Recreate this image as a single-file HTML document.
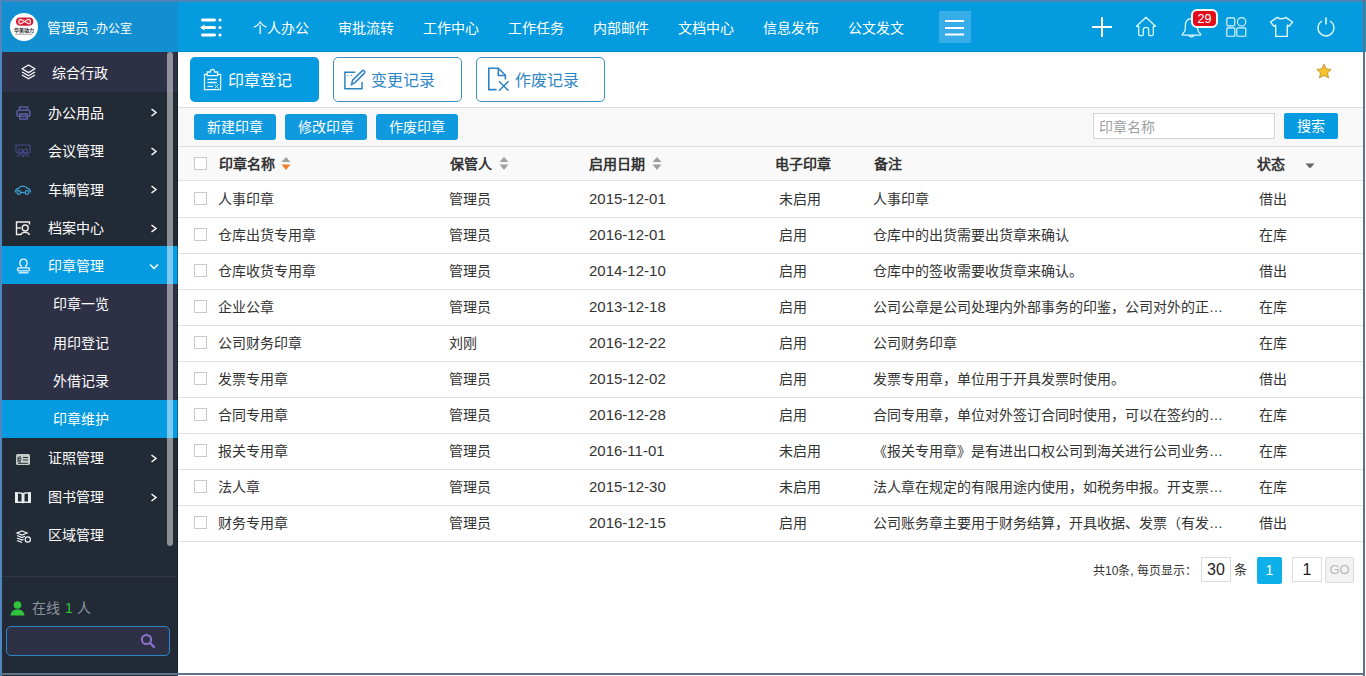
<!DOCTYPE html>
<html lang="zh-CN">
<head>
<meta charset="utf-8">
<style>
*{margin:0;padding:0;box-sizing:border-box}
html,body{width:1366px;height:676px;overflow:hidden;background:#fff}
body{position:relative;font-family:"Liberation Sans",sans-serif;font-size:14px;color:#333}
.a{position:absolute}
#hdr{left:0;top:0;width:1366px;height:52px;background:#049bdf}
#hdrl{left:0;top:0;width:178px;height:52px;background:#128fd0}
#side{left:0;top:52px;width:178px;height:624px;background:#222a36}
#main{left:178px;top:52px;width:1188px;height:624px;background:#fff}
.nav{top:18px;color:#fff;font-size:14px;line-height:20px;white-space:nowrap}
.srow{left:2px;width:176px;color:#fff;font-size:14px}
.srow span{position:absolute;line-height:20px;white-space:nowrap}
.chev{position:absolute;left:150px;width:8px;height:8px}
.tabbtn{top:57px;width:129px;height:45px;border-radius:5px;font-size:16px;line-height:20px}
.tb{top:114px;width:82px;height:26px;border-radius:3px;background:#0f9ae0;color:#fff;text-align:center;line-height:26px}
.th{position:absolute;font-weight:bold;color:#333;line-height:20px;white-space:nowrap}
.td{position:absolute;line-height:20px;white-space:nowrap;color:#333}
.dt{font-size:15px}
.hl{position:absolute;left:178px;width:1185px;height:1px;background:#e0e0e0}
.cb{position:absolute;left:194px;width:13px;height:13px;border:1px solid #c8c8c8;background:#fff}
</style>
</head>
<body>
<!-- header -->
<div id="hdr" class="a"></div>
<div id="hdrl" class="a"></div>
<svg class="a" style="left:10px;top:13px" width="28" height="28" viewBox="0 0 28 28">
 <circle cx="14" cy="14" r="14" fill="#fff"/>
 <rect x="6" y="4.4" width="17.3" height="8.3" rx="4.1" fill="#d01c34"/>
 <path d="M10.6 6.3 C8.2 6.3 8.2 10.8 10.6 10.8 C12.4 10.8 16.9 6.3 18.7 6.3 C21.1 6.3 21.1 10.8 18.7 10.8 C16.9 10.8 12.4 6.3 10.6 6.3Z" fill="#e03048" stroke="#f8d8dc" stroke-width="1.2"/>
 <text x="14" y="19.2" font-size="5" font-weight="bold" text-anchor="middle" fill="#222" textLength="20" lengthAdjust="spacingAndGlyphs">华美动力</text>
 <rect x="5" y="20.8" width="17" height="1" fill="#aaa"/>
</svg>
<div class="a" style="left:47px;top:18px;color:#fff;line-height:20px;white-space:nowrap"><span style="font-size:14px">管理员</span><span style="font-size:12px"> -办公室</span></div>
<svg class="a" style="left:200px;top:18px" width="22" height="19" viewBox="0 0 22 19">
 <g fill="#fff">
 <rect x="1" y="0.5" width="15" height="3" rx="1.5"/>
 <circle cx="20" cy="2" r="1.6"/>
 <rect x="4" y="8" width="12" height="3" rx="1.5"/>
 <path d="M0 9.5 L4.5 6.5 L4.5 12.5Z"/>
 <circle cx="20" cy="9.5" r="1.6"/>
 <rect x="1" y="15.5" width="15" height="3" rx="1.5"/>
 <circle cx="20" cy="17" r="1.6"/>
 </g>
</svg>
<div class="a nav" style="left:253px">个人办公</div>
<div class="a nav" style="left:338px">审批流转</div>
<div class="a nav" style="left:423px">工作中心</div>
<div class="a nav" style="left:508px">工作任务</div>
<div class="a nav" style="left:593px">内部邮件</div>
<div class="a nav" style="left:678px">文档中心</div>
<div class="a nav" style="left:763px">信息发布</div>
<div class="a nav" style="left:848px">公文发文</div>
<div class="a" style="left:939px;top:11px;width:32px;height:32px;background:#36ace8"></div>
<svg class="a" style="left:945px;top:19px" width="20" height="18" viewBox="0 0 20 18">
 <g fill="#fff"><rect x="0" y="1" width="19" height="2"/><rect x="0" y="8" width="19" height="2"/><rect x="0" y="14.5" width="19" height="2"/></g>
</svg>
<!-- right icons -->
<svg class="a" style="left:1092px;top:17px" width="20" height="20" viewBox="0 0 20 20">
 <rect x="9" y="0" width="2" height="20" fill="#fff"/><rect x="0" y="9" width="20" height="2" fill="#fff"/>
</svg>
<svg class="a" style="left:1135px;top:16px" width="22" height="21" viewBox="0 0 22 21">
 <path d="M11 1.3 L20.5 10.3 L18.3 10.3 L18.3 18.3 Q18.3 19.6 17 19.6 L15 19.6 Q13.7 19.6 13.7 18.3 L13.7 13.8 C13.7 10.6 8.3 10.6 8.3 13.8 L8.3 18.3 Q8.3 19.6 7 19.6 L5 19.6 Q3.7 19.6 3.7 18.3 L3.7 10.3 L1.5 10.3 Z" fill="none" stroke="#dcfaff" stroke-width="1.3" stroke-linejoin="round"/>
</svg>
<svg class="a" style="left:1181px;top:16px" width="21" height="22" viewBox="0 0 21 22">
 <path d="M10.5 2.5 C6 2.5 4.3 6 4.3 10 L4.3 13.5 C4.3 15.5 2.8 16.5 1.3 18.2 L1.3 19 L19.7 19 L19.7 18.2 C18.2 16.5 16.7 15.5 16.7 13.5 L16.7 10 C16.7 6 15 2.5 10.5 2.5Z" fill="none" stroke="#e4faff" stroke-width="1.25" stroke-linejoin="round"/>
 <path d="M8 19.3 C8 21.3 13 21.3 13 19.3" fill="none" stroke="#e4faff" stroke-width="1.25"/>
</svg>
<div class="a" style="left:1191px;top:9px;width:27px;height:19px;border-radius:6px;background:#e20d1c;border:2px solid #f4fbff;color:#fff;font-size:12.5px;line-height:16px;text-align:center">29</div>
<svg class="a" style="left:1226px;top:17px" width="21" height="20" viewBox="0 0 21 20">
 <g fill="none" stroke="#e2f9ff" stroke-width="1.15">
 <rect x="0.8" y="0.8" width="8" height="8" rx="1.5"/>
 <circle cx="15.6" cy="4.8" r="4.2"/>
 <rect x="0.8" y="10.8" width="8" height="8.4" rx="1"/>
 <rect x="10.8" y="10.8" width="9" height="8.4" rx="1"/>
 </g>
</svg>
<svg class="a" style="left:1269px;top:16px" width="25" height="22" viewBox="0 0 25 22">
 <path d="M8.3 1.3 C9.5 3.2 15.5 3.2 16.7 1.3 L23.5 6 L20.3 10.2 L18.3 9.2 L18.3 20.4 L6.7 20.4 L6.7 9.2 L4.7 10.2 L1.5 6 Z" fill="none" stroke="#e2f9ff" stroke-width="1.4" stroke-linejoin="round"/>
</svg>
<svg class="a" style="left:1316px;top:17px" width="20" height="20" viewBox="0 0 20 20">
 <path d="M6 4 A8 8 0 1 0 14 4" fill="none" stroke="#e2f9ff" stroke-width="1.4"/>
 <rect x="9.2" y="0.5" width="1.6" height="7" fill="#e2f9ff"/>
</svg>

<!-- sidebar -->
<div id="side" class="a"></div>
<div class="a" style="left:2px;top:52px;width:176px;height:40px;background:#2e3146"></div>
<div class="a" style="left:2px;top:246px;width:176px;height:38px;background:#069ae0"></div>
<div class="a" style="left:2px;top:284px;width:176px;height:116px;background:#2e3146"></div>
<div class="a" style="left:2px;top:400px;width:176px;height:38px;background:#069ae0"></div>
<!-- side text -->
<div class="a srow" style="top:0"><span style="left:50px;top:63px">综合行政</span>
<span style="left:46px;top:102.5px">办公用品</span>
<span style="left:46px;top:141px">会议管理</span>
<span style="left:46px;top:179.5px">车辆管理</span>
<span style="left:46px;top:218px">档案中心</span>
<span style="left:46px;top:256px">印章管理</span>
<span style="left:51px;top:294px">印章一览</span>
<span style="left:51px;top:333px">用印登记</span>
<span style="left:51px;top:370.5px">外借记录</span>
<span style="left:51px;top:409px">印章维护</span>
<span style="left:46px;top:448px">证照管理</span>
<span style="left:46px;top:487px">图书管理</span>
<span style="left:46px;top:525px">区域管理</span>
</div>
<!-- chevrons -->
<svg class="a" style="left:150px;top:108px" width="8" height="9" viewBox="0 0 8 9"><path d="M1.5 1 L6 4.5 L1.5 8" fill="none" stroke="#fff" stroke-width="1.5"/></svg>
<svg class="a" style="left:150px;top:146.5px" width="8" height="9" viewBox="0 0 8 9"><path d="M1.5 1 L6 4.5 L1.5 8" fill="none" stroke="#fff" stroke-width="1.5"/></svg>
<svg class="a" style="left:150px;top:185px" width="8" height="9" viewBox="0 0 8 9"><path d="M1.5 1 L6 4.5 L1.5 8" fill="none" stroke="#fff" stroke-width="1.5"/></svg>
<svg class="a" style="left:150px;top:223.5px" width="8" height="9" viewBox="0 0 8 9"><path d="M1.5 1 L6 4.5 L1.5 8" fill="none" stroke="#fff" stroke-width="1.5"/></svg>
<svg class="a" style="left:149px;top:263px" width="10" height="7" viewBox="0 0 10 7"><path d="M1 1.5 L5 5.5 L9 1.5" fill="none" stroke="#fff" stroke-width="1.5"/></svg>
<svg class="a" style="left:150px;top:454px" width="8" height="9" viewBox="0 0 8 9"><path d="M1.5 1 L6 4.5 L1.5 8" fill="none" stroke="#fff" stroke-width="1.5"/></svg>
<svg class="a" style="left:150px;top:492.5px" width="8" height="9" viewBox="0 0 8 9"><path d="M1.5 1 L6 4.5 L1.5 8" fill="none" stroke="#fff" stroke-width="1.5"/></svg>
<!-- side icons -->
<svg class="a" style="left:21px;top:64px" width="15" height="16" viewBox="0 0 15 16">
 <g fill="none" stroke="#fff" stroke-width="1.3" stroke-linejoin="round">
 <path d="M7.5 1 L14 4.8 L7.5 8.6 L1 4.8Z"/>
 <path d="M1 8 L7.5 11.8 L14 8"/>
 <path d="M1 11 L7.5 14.8 L14 11"/>
 </g>
</svg>
<svg class="a" style="left:16px;top:106px" width="15" height="14" viewBox="0 0 15 14">
 <g fill="none" stroke="#5d5a9e" stroke-width="1.6">
 <path d="M3.5 4 L3.5 1 L11.5 1 L11.5 4"/>
 <rect x="1" y="4.2" width="13" height="6" rx="2"/>
 <rect x="3.8" y="8" width="7.4" height="5"/>
 </g>
</svg>
<svg class="a" style="left:15px;top:144px" width="16" height="14" viewBox="0 0 16 14">
 <g fill="none" stroke="#4a4888" stroke-width="1.2">
 <rect x="1" y="1" width="14" height="8" rx="1"/>
 <circle cx="5.5" cy="7" r="2"/>
 <circle cx="10.5" cy="7" r="2"/>
 <path d="M2.5 13 C3 10 8 10 8.5 13 M7.5 13 C8 10 13 10 13.5 13"/>
 </g>
</svg>
<svg class="a" style="left:14px;top:184px" width="18" height="12" viewBox="0 0 18 12">
 <g fill="none" stroke="#3d9dd0" stroke-width="1.3">
 <path d="M1.5 8.5 L1.5 7 C2 5 3.5 4.5 4.5 4.5 C6 1.5 11 1 13.5 4.5 C15.5 4.8 16.5 6 16.5 8.5"/>
 <circle cx="4.8" cy="8.5" r="1.8"/>
 <circle cx="13" cy="8.5" r="1.8"/>
 <path d="M6.6 8.5 L11.2 8.5"/>
 </g>
</svg>
<svg class="a" style="left:15px;top:221px" width="16" height="15" viewBox="0 0 16 15">
 <g fill="none" stroke="#f0eee6" stroke-width="1.4">
 <path d="M7 1 L1.5 1 L1.5 13.5 L6 13.5"/>
 <path d="M7 1 L14.5 1 L14.5 3.5"/>
 <path d="M1.5 7 L6 7"/>
 <circle cx="10.2" cy="7" r="3"/>
 <path d="M6 14 C6.5 10.5 13.5 10.5 14.5 14"/>
 </g>
</svg>
<svg class="a" style="left:16px;top:258px" width="15" height="16" viewBox="0 0 15 16">
 <g fill="none" stroke="#e8f6ff" stroke-width="1.3">
 <path d="M5.3 9.5 L5.3 8 C3 6.5 3.3 1.2 7.5 1.2 C11.7 1.2 12 6.5 9.7 8 L9.7 9.5"/>
 <rect x="1.5" y="9.8" width="12" height="3" rx="1"/>
 <path d="M2.5 14.8 L12.5 14.8"/>
 </g>
</svg>
<svg class="a" style="left:15px;top:453px" width="16" height="13" viewBox="0 0 16 13">
 <rect x="1" y="1" width="14" height="11" rx="1.5" fill="#c8ccc8" />
 <g stroke="#2a3038" stroke-width="1" fill="none">
 <path d="M3 4 L3 9 M3.5 4 L6 4 M3.5 9 L6 9 M8 4.5 L13 4.5 M8 7 L13 7 M3 10.3 L13 10.3"/>
 <circle cx="4.8" cy="6.3" r="1.2"/>
 </g>
</svg>
<svg class="a" style="left:14px;top:491px" width="18" height="13" viewBox="0 0 18 13">
 <path d="M1 1 L8.2 1.5 L9 2.2 L9.8 1.5 L17 1 L17 12 L9.8 12 L9 12.5 L8.2 12 L1 12Z" fill="#e8ecea"/>
 <path d="M4 2.5 L7.5 3 L7.5 10.5 L4 10.5Z M14 2.5 L10.5 3 L10.5 10.5 L14 10.5Z" fill="#222a36"/>
</svg>
<svg class="a" style="left:15px;top:530px" width="17" height="13" viewBox="0 0 17 13">
 <g fill="none" stroke="#f4f4f4" stroke-width="1.2">
 <path d="M7 1 L12 3 L7 5 L2 3Z"/>
 <path d="M2 5.5 L7 7.5 L10 6.3"/>
 <path d="M2 8 L7 10 L8.5 9.4"/>
 <path d="M2 10.5 L7 12.5"/>
 <circle cx="12.8" cy="9.5" r="2.6"/>
 </g>
</svg>
<!-- scrollbar -->
<div class="a" style="left:167px;top:52px;width:6px;height:494px;border-radius:3px;background:rgba(255,255,255,0.48)"></div>
<div class="a" style="left:177px;top:52px;width:1px;height:621px;background:rgba(0,0,0,0.3)"></div>
<!-- bottom area -->
<div class="a" style="left:2px;top:576px;width:174px;height:1px;background:#35344c"></div>
<svg class="a" style="left:10px;top:600px" width="15" height="16" viewBox="0 0 15 16">
 <circle cx="7.5" cy="5" r="3.8" fill="#30c43a"/>
 <path d="M0.5 15.5 C1 11 4 9.5 7.5 9.5 C11 9.5 14 11 14.5 15.5Z" fill="#30c43a"/>
</svg>
<div class="a" style="left:32px;top:598px;line-height:20px;font-size:14px;color:#8b949e;white-space:nowrap">在线 <span style="color:#35c23f;margin-left:1px">1</span> 人</div>
<div class="a" style="left:6px;top:626px;width:164px;height:30px;border:1px solid #2b86c6;border-radius:5px;background:#2e3046"></div>
<svg class="a" style="left:140px;top:633px" width="16" height="16" viewBox="0 0 16 16">
 <circle cx="6.5" cy="6.5" r="4.6" fill="none" stroke="#8c72cc" stroke-width="2"/>
 <path d="M10 10 L14 14" stroke="#8c72cc" stroke-width="2.4" stroke-linecap="round"/>
</svg>

<!-- main -->
<div id="main" class="a"></div>
<div class="a" style="left:178px;top:51px;width:1185px;height:1px;background:#078dcf"></div>
<div class="a" style="left:178px;top:52px;width:1185px;height:1px;background:#e8f8fc"></div>
<div class="a" style="left:178px;top:53px;width:1185px;height:1px;background:#f8f8f6"></div>
<!-- tabs -->
<div class="a tabbtn" style="left:190px;background:#069ae0;color:#fff"><span class="a" style="left:38px;top:14px">印章登记</span></div>
<svg class="a" style="left:203px;top:67px" width="19" height="24" viewBox="0 0 19 24">
 <g fill="none" stroke="#e6faff" stroke-width="1.3">
 <path d="M4.3 7.3 L1.5 7.3 L1.5 22.6 L17.6 22.6 L17.6 7.3 L14.6 7.3"/>
 <path d="M4.3 8.6 L4.3 5 L7.3 5 C7.3 1.5 11.6 1.5 11.6 5 L14.6 5 L14.6 8.6 Z"/>
 <path d="M4.5 12.4 L14 12.4 M4.5 15.5 L14 15.5 M4.5 19.3 L10 19.3"/>
 <path d="M11.5 17.5 L15.5 21.5 M15.5 17.5 L11.5 21.5" stroke-width="0.9"/>
 </g>
</svg>
<div class="a tabbtn" style="left:333px;border:1px solid #3b91c4;color:#2f86c4;background:#fff"><span class="a" style="left:37px;top:13px">变更记录</span></div>
<svg class="a" style="left:343px;top:69px" width="24" height="21" viewBox="0 0 24 21">
 <g fill="none" stroke="#2f82c2" stroke-width="1.5">
 <path d="M12.3 3.2 L1.9 3.2 L1.9 19.8 L19 19.8 L19 13"/>
 <path d="M8.5 15.6 L9.6 11.2 L19.4 1.6 C20.5 0.8 22.6 2.6 21.6 3.9 L12 13.6 Z"/>
 </g>
 <circle cx="5" cy="6.6" r="0.7" fill="#2f82c2"/><circle cx="8.4" cy="6.6" r="0.7" fill="#2f82c2"/>
</svg>
<div class="a tabbtn" style="left:476px;border:1px solid #3b91c4;color:#2f86c4;background:#fff"><span class="a" style="left:38px;top:13px">作废记录</span></div>
<svg class="a" style="left:487px;top:66px" width="24" height="27" viewBox="0 0 24 27">
 <g fill="none" stroke="#2f82c2" stroke-width="1.6">
 <path d="M9.6 23.6 L1.8 23.6 L1.8 2.3 L11.3 2.3 L18.4 9.3 L18.4 13.4"/>
 <path d="M11.3 2.6 L11.3 9.5 L18 9.5"/>
 <path d="M12 15.2 L21.5 24.8 M21.5 15.2 L12 24.8" stroke-width="1.5"/>
 </g>
</svg>
<svg class="a" style="left:1315px;top:62px" width="18" height="18" viewBox="0 0 18 18">
 <path d="M9 2.2 L11.1 6.9 L16 7.5 L12.5 11 L13.5 15.8 L9 13.4 L4.5 15.8 L5.5 11 L2 7.5 L6.9 6.9Z" fill="#f6c431" stroke="#c8962a" stroke-width="1" stroke-linejoin="round"/>
</svg>
<div class="hl" style="top:107px;background:#dedede"></div>
<!-- toolbar -->
<div class="a" style="left:178px;top:108px;width:1185px;height:38px;background:#f8f8f8"></div>
<div class="a tb" style="left:194px">新建印章</div>
<div class="a tb" style="left:285px">修改印章</div>
<div class="a tb" style="left:376px">作废印章</div>
<div class="a" style="left:1093px;top:113px;width:182px;height:26px;border:1px solid #d4d4d4;background:#fff;color:#a0a0a0;line-height:26px;padding-left:5px">印章名称</div>
<div class="a" style="left:1284px;top:113px;width:54px;height:26px;border-radius:2px;background:#069ae0;color:#fff;text-align:center;line-height:26px">搜索</div>
<div class="hl" style="top:146px;background:#dedede"></div>
<!-- table header -->
<div class="a" style="left:178px;top:147px;width:1185px;height:33px;background:#f9f9f9"></div>
<div class="hl" style="top:180px"></div>
<div class="cb" style="top:157px"></div>
<div class="th" style="left:219px;top:154px">印章名称</div>
<svg class="a" style="left:281px;top:156px" width="10" height="15" viewBox="0 0 10 15"><path d="M5 1 L9.5 6 L0.5 6Z" fill="#a0a0a0"/><path d="M0.5 8.5 L9.5 8.5 L5 14Z" fill="#ee7d28"/></svg>
<div class="th" style="left:450px;top:154px">保管人</div>
<svg class="a" style="left:499px;top:156px" width="10" height="15" viewBox="0 0 10 15"><path d="M5 1 L9.5 6 L0.5 6Z" fill="#a0a0a0"/><path d="M0.5 8.5 L9.5 8.5 L5 14Z" fill="#a0a0a0"/></svg>
<div class="th" style="left:589px;top:154px">启用日期</div>
<svg class="a" style="left:652px;top:156px" width="10" height="15" viewBox="0 0 10 15"><path d="M5 1 L9.5 6 L0.5 6Z" fill="#a0a0a0"/><path d="M0.5 8.5 L9.5 8.5 L5 14Z" fill="#a0a0a0"/></svg>
<div class="th" style="left:775px;top:154px">电子印章</div>
<div class="th" style="left:874px;top:154px">备注</div>
<div class="th" style="left:1257px;top:154px">状态</div>
<svg class="a" style="left:1305px;top:163px" width="10" height="6" viewBox="0 0 10 6"><path d="M0.5 0.5 L9.5 0.5 L5 5.5Z" fill="#666"/></svg>
<div class="cb" style="top:192px"></div>
<div class="td" style="left:218px;top:189px">人事印章</div>
<div class="td" style="left:449px;top:189px">管理员</div>
<div class="td dt" style="left:589px;top:189px">2015-12-01</div>
<div class="td" style="left:779px;top:189px">未启用</div>
<div class="td" style="left:873px;top:189px">人事印章</div>
<div class="td" style="left:1259px;top:189px">借出</div>
<div class="hl" style="top:217px"></div>
<div class="cb" style="top:228px"></div>
<div class="td" style="left:218px;top:225px">仓库出货专用章</div>
<div class="td" style="left:449px;top:225px">管理员</div>
<div class="td dt" style="left:589px;top:225px">2016-12-01</div>
<div class="td" style="left:779px;top:225px">启用</div>
<div class="td" style="left:873px;top:225px">仓库中的出货需要出货章来确认</div>
<div class="td" style="left:1259px;top:225px">在库</div>
<div class="hl" style="top:253px"></div>
<div class="cb" style="top:264px"></div>
<div class="td" style="left:218px;top:261px">仓库收货专用章</div>
<div class="td" style="left:449px;top:261px">管理员</div>
<div class="td dt" style="left:589px;top:261px">2014-12-10</div>
<div class="td" style="left:779px;top:261px">启用</div>
<div class="td" style="left:873px;top:261px">仓库中的签收需要收货章来确认。</div>
<div class="td" style="left:1259px;top:261px">借出</div>
<div class="hl" style="top:289px"></div>
<div class="cb" style="top:300px"></div>
<div class="td" style="left:218px;top:297px">企业公章</div>
<div class="td" style="left:449px;top:297px">管理员</div>
<div class="td dt" style="left:589px;top:297px">2013-12-18</div>
<div class="td" style="left:779px;top:297px">启用</div>
<div class="td" style="left:873px;top:297px">公司公章是公司处理内外部事务的印鉴，公司对外的正…</div>
<div class="td" style="left:1259px;top:297px">在库</div>
<div class="hl" style="top:325px"></div>
<div class="cb" style="top:336px"></div>
<div class="td" style="left:218px;top:333px">公司财务印章</div>
<div class="td" style="left:449px;top:333px">刘刚</div>
<div class="td dt" style="left:589px;top:333px">2016-12-22</div>
<div class="td" style="left:779px;top:333px">启用</div>
<div class="td" style="left:873px;top:333px">公司财务印章</div>
<div class="td" style="left:1259px;top:333px">在库</div>
<div class="hl" style="top:361px"></div>
<div class="cb" style="top:372px"></div>
<div class="td" style="left:218px;top:369px">发票专用章</div>
<div class="td" style="left:449px;top:369px">管理员</div>
<div class="td dt" style="left:589px;top:369px">2015-12-02</div>
<div class="td" style="left:779px;top:369px">启用</div>
<div class="td" style="left:873px;top:369px">发票专用章，单位用于开具发票时使用。</div>
<div class="td" style="left:1259px;top:369px">借出</div>
<div class="hl" style="top:397px"></div>
<div class="cb" style="top:408px"></div>
<div class="td" style="left:218px;top:405px">合同专用章</div>
<div class="td" style="left:449px;top:405px">管理员</div>
<div class="td dt" style="left:589px;top:405px">2016-12-28</div>
<div class="td" style="left:779px;top:405px">启用</div>
<div class="td" style="left:873px;top:405px">合同专用章，单位对外签订合同时使用，可以在签约的…</div>
<div class="td" style="left:1259px;top:405px">在库</div>
<div class="hl" style="top:433px"></div>
<div class="cb" style="top:444px"></div>
<div class="td" style="left:218px;top:441px">报关专用章</div>
<div class="td" style="left:449px;top:441px">管理员</div>
<div class="td dt" style="left:589px;top:441px">2016-11-01</div>
<div class="td" style="left:779px;top:441px">未启用</div>
<div class="td" style="left:873px;top:441px">《报关专用章》是有进出口权公司到海关进行公司业务…</div>
<div class="td" style="left:1259px;top:441px">在库</div>
<div class="hl" style="top:469px"></div>
<div class="cb" style="top:480px"></div>
<div class="td" style="left:218px;top:477px">法人章</div>
<div class="td" style="left:449px;top:477px">管理员</div>
<div class="td dt" style="left:589px;top:477px">2015-12-30</div>
<div class="td" style="left:779px;top:477px">未启用</div>
<div class="td" style="left:873px;top:477px">法人章在规定的有限用途内使用，如税务申报。开支票…</div>
<div class="td" style="left:1259px;top:477px">在库</div>
<div class="hl" style="top:505px"></div>
<div class="cb" style="top:516px"></div>
<div class="td" style="left:218px;top:513px">财务专用章</div>
<div class="td" style="left:449px;top:513px">管理员</div>
<div class="td dt" style="left:589px;top:513px">2016-12-15</div>
<div class="td" style="left:779px;top:513px">启用</div>
<div class="td" style="left:873px;top:513px">公司账务章主要用于财务结算，开具收据、发票（有发…</div>
<div class="td" style="left:1259px;top:513px">借出</div>
<div class="hl" style="top:541px"></div>
<!-- pagination -->
<div class="a" style="left:1093px;top:561px;font-size:12px;line-height:20px;color:#333;white-space:nowrap">共10条, 每页显示：</div>
<div class="a" style="left:1201px;top:557px;width:30px;height:25px;border:1px solid #dcdcdc;text-align:center;font-size:16px;line-height:23px;color:#222">30</div>
<div class="a" style="left:1234px;top:560px;font-size:13px;line-height:20px;color:#333">条</div>
<div class="a" style="left:1257px;top:557px;width:25px;height:27px;border-radius:2px;background:#0eb0ea;color:#fff;text-align:center;font-size:14px;line-height:27px">1</div>
<div class="a" style="left:1292px;top:557px;width:30px;height:25px;border:1px solid #dcdcdc;text-align:center;font-size:16px;line-height:23px;color:#222">1</div>
<div class="a" style="left:1325px;top:557px;width:29px;height:26px;border:1px solid #dcdcdc;border-radius:2px;background:#f2f2f2;text-align:center;font-size:13px;line-height:24px;color:#b8b8b8">GO</div>

<!-- frame -->
<div class="a" style="left:0;top:0;width:1366px;height:2px;background:#4c84ba"></div>
<div class="a" style="left:0;top:0;width:2px;height:676px;background:#4f88bf"></div>
<div class="a" style="left:1363px;top:0;width:2px;height:676px;background:#5e7389"></div>
<div class="a" style="left:0;top:673px;width:1365px;height:2px;background:#5e7389"></div>
</body>
</html>
